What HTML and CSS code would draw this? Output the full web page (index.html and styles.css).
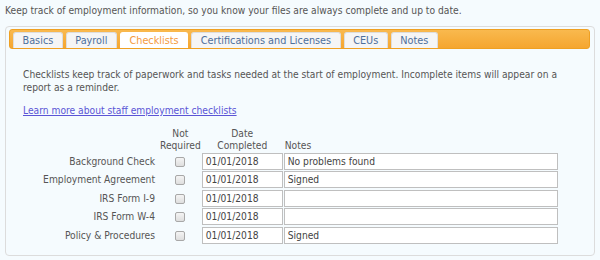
FILE: index.html
```html
<!DOCTYPE html>
<html>
<head>
<meta charset="utf-8">
<link rel="stylesheet" href="styles.css">
</head>
<body>
<p class="intro">Keep track of employment information, so you know your files are always complete and up to date.</p>
<div class="panel">
  <div class="tabbar">
    <span class="tab">Basics</span>
    <span class="tab">Payroll</span>
    <span class="tab active">Checklists</span>
    <span class="tab">Certifications and Licenses</span>
    <span class="tab">CEUs</span>
    <span class="tab">Notes</span>
  </div>
  <div class="content">
    <p class="desc">Checklists keep track of paperwork and tasks needed at the start of employment. Incomplete items will appear on a report as a reminder.</p>
    <p class="more"><a href="#">Learn more about staff employment checklists</a></p>
    <table class="checklist">
      <thead>
        <tr>
          <th class="label"></th>
          <th class="nr">Not<br>Required</th>
          <th class="dc">Date<br>Completed</th>
          <th class="notes">Notes</th>
        </tr>
      </thead>
      <tbody>
        <tr><td class="label">Background Check</td><td class="nr"><span class="cb"></span></td><td><span class="inp date">01/01/2018</span></td><td><span class="inp note">No problems found</span></td></tr>
        <tr><td class="label">Employment Agreement</td><td class="nr"><span class="cb"></span></td><td><span class="inp date">01/01/2018</span></td><td><span class="inp note">Signed</span></td></tr>
        <tr><td class="label">IRS Form I-9</td><td class="nr"><span class="cb"></span></td><td><span class="inp date">01/01/2018</span></td><td><span class="inp note"></span></td></tr>
        <tr><td class="label">IRS Form W-4</td><td class="nr"><span class="cb"></span></td><td><span class="inp date">01/01/2018</span></td><td><span class="inp note"></span></td></tr>
        <tr><td class="label">Policy &amp; Procedures</td><td class="nr"><span class="cb"></span></td><td><span class="inp date">01/01/2018</span></td><td><span class="inp note">Signed</span></td></tr>
      </tbody>
    </table>
  </div>
</div>
</body>
</html>
```
FILE: styles.css
```css
html, body {
  margin: 0;
  padding: 0;
  background: #f5fbfe;
}
body {
  font-family: "DejaVu Sans Condensed", "DejaVu Sans", sans-serif;
  font-size: 10.2px;
  color: #555;
  padding: 4px 5px 0 5px;
}
.intro {
  margin: 0 0 8px 0;
  line-height: 14px;
}
.panel {
  border: 1px solid #dcdcdc;
  border-radius: 4px;
  background: #f5fbfe;
  padding: 2px 4px 0 3px;
  height: 230px;
  box-sizing: border-box;
}
.tabbar {
  display: flex;
  gap: 3px;
  padding: 3px 2px 0 3px;
  height: 20px;
  box-sizing: border-box;
  background: linear-gradient(#f9b94e, #f5a630);
  border: 1px solid #efa022;
  border-radius: 3px;
  align-items: flex-end;
}
.tab {
  display: block;
  height: 15px;
  line-height: 15px;
  padding: 0 8.5px;
  color: #4d6f9c;
  background: #f5f5f5;
  border: 1px solid #ddd;
  border-bottom: none;
  border-radius: 3px 3px 0 0;
  font-size: 10.8px;
}
.tab.active {
  background: #fff;
  color: #f49a3e;
  border-color: #fff;
}
.content {
  padding: 19px 0 0 14px;
}
.desc {
  margin: 0;
  line-height: 13px;
  width: 545px;
}
.more {
  margin: 10px 0 0 0;
  line-height: 13px;
}
.more a {
  color: #5b55d6;
}
.checklist {
  border-collapse: collapse;
  margin-top: 11px;
}
.checklist th {
  font-weight: normal;
  line-height: 12px;
  padding: 0 0 1px 0;
  vertical-align: bottom;
  text-align: center;
}
.checklist th.label { width: 137px; }
.checklist th.nr { width: 39px; }
.checklist th.dc { width: 83px; }
.checklist th.notes { text-align: left; padding-left: 1px; }
.checklist td {
  padding: 0 0 1.4px 0;
  height: 17px;
}
.checklist td.label {
  text-align: right;
  padding-right: 5px;
  box-sizing: border-box;
  width: 137px;
}
.checklist td.nr {
  text-align: center;
}
.cb {
  display: inline-block;
  width: 8px;
  height: 8px;
  border: 1px solid #a8a8a8;
  border-radius: 2px;
  background: linear-gradient(#f4f4f4, #dedede);
  vertical-align: middle;
}
.inp {
  display: block;
  height: 17px;
  line-height: 15px;
  box-sizing: border-box;
  border: 1px solid #bfbfbf;
  background: #fff;
  padding: 0 3px;
  color: #444;
}
.inp.date { width: 81px; margin-left: 1px; }
.inp.note { width: 274px; }
```
